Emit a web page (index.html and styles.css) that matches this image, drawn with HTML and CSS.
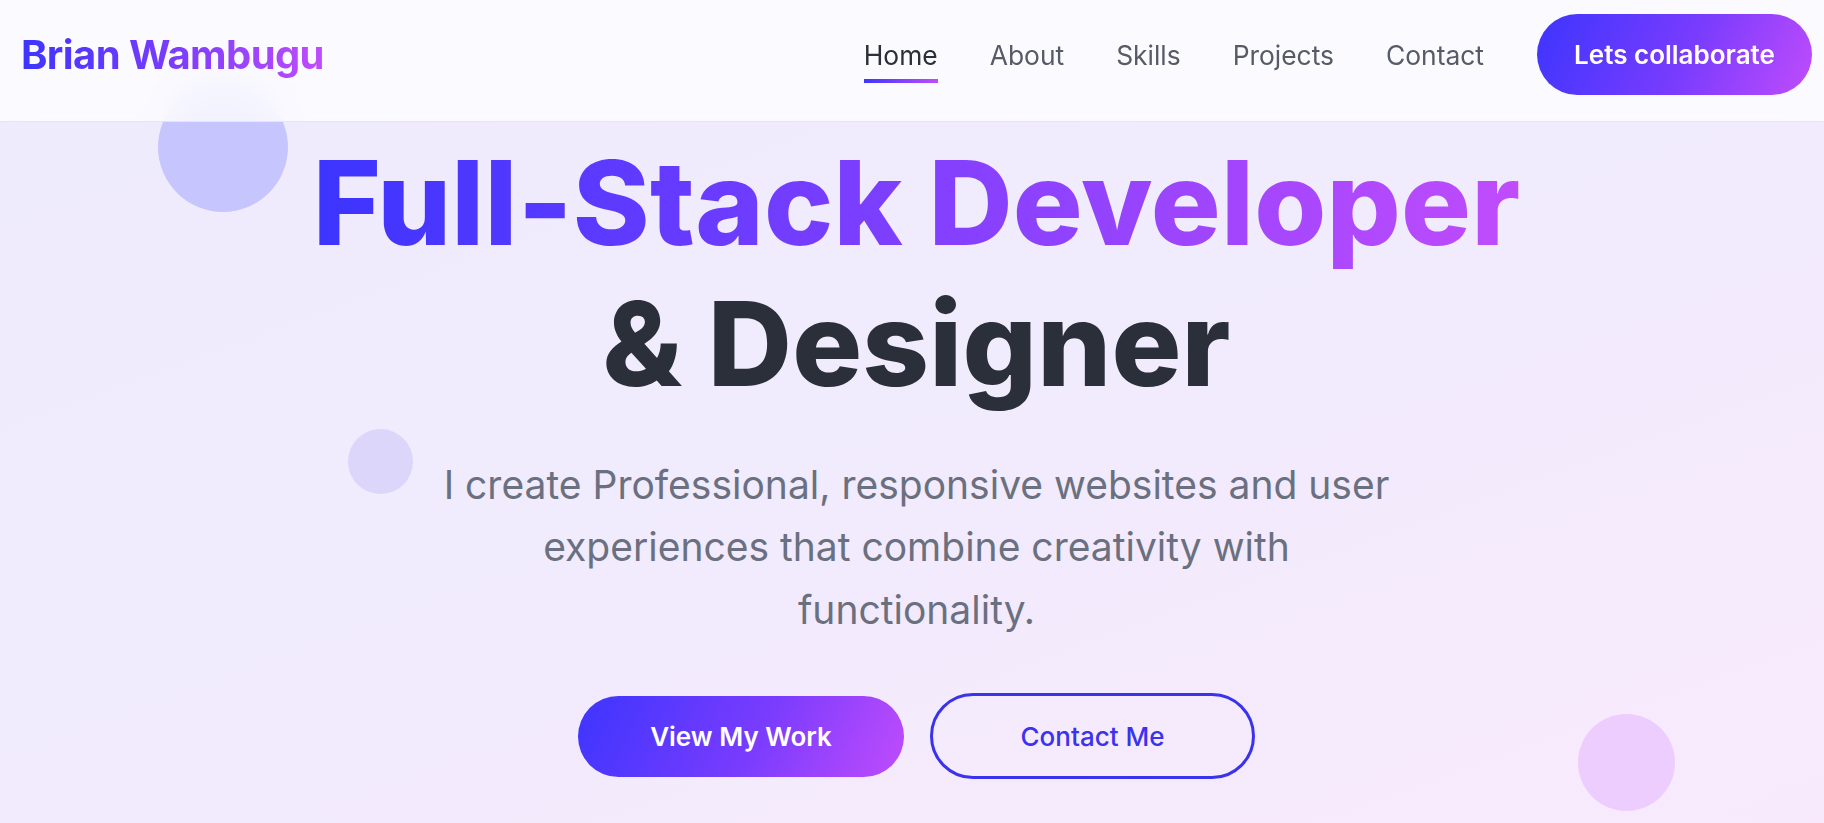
FILE: index.html
```html
<!DOCTYPE html>
<html lang="en">
<head>
<meta charset="utf-8">
<title>Brian Wambugu</title>
<link rel="stylesheet" href="styles.css">
</head>
<body>
<header class="site-header">
  <div class="header-row">
    <a class="logo" href="#">Brian Wambugu</a>
    <nav class="nav">
      <ul class="nav-list">
        <li><a class="nav-link active" href="#">Home</a></li>
        <li><a class="nav-link" href="#">About</a></li>
        <li><a class="nav-link" href="#">Skills</a></li>
        <li><a class="nav-link" href="#">Projects</a></li>
        <li><a class="nav-link" href="#">Contact</a></li>
      </ul>
      <a class="btn btn-cta" href="#">Lets collaborate</a>
    </nav>
  </div>
</header>
<main class="hero">
  <span class="blob blob-1"></span>
  <span class="blob blob-2"></span>
  <span class="blob blob-3"></span>
  <div class="hero-inner">
    <h1 class="hero-title"><span class="grad-text">Full-Stack Developer</span><br>&amp; Designer</h1>
    <p class="hero-text">I create Professional, responsive websites and user experiences that combine creativity with functionality.</p>
    <div class="hero-actions">
      <a class="btn btn-primary" href="#">View My Work</a>
      <a class="btn btn-outline" href="#">Contact Me</a>
    </div>
  </div>
</main>
</body>
</html>
```
FILE: styles.css
```css
* { box-sizing: border-box; }
html, body { margin: 0; padding: 0; }
body {
  font-family: "Inter", "Noto Sans", sans-serif;
  color: #2b2f3a;
  overflow: hidden;
  height: 823px;
}
a { text-decoration: none; }

.site-header {
  position: fixed;
  top: 0; left: 0; right: 0;
  height: 122px;
  padding: 14px 12px 0 21px;
  background: rgba(253, 252, 255, 0.82);
  backdrop-filter: blur(14px);
  border-bottom: 1px solid #e6e4ee;
  z-index: 10;
}
.header-row {
  height: 81px;
  display: flex;
  align-items: center;
  justify-content: space-between;
}
.logo {
  font-size: 40px;
  font-weight: 700;
  letter-spacing: -0.6px;
  background: linear-gradient(90deg, #3d35ff 0%, #7a3cfd 50%, #c04cfc 100%);
  -webkit-background-clip: text;
  background-clip: text;
  color: transparent;
}
.nav {
  display: flex;
  align-items: center;
  gap: 53px;
}
.nav-list {
  list-style: none;
  margin: 0;
  padding: 0;
  display: flex;
  gap: 52px;
}
.nav-link {
  position: relative;
  display: block;
  font-size: 26.4px;
  font-weight: 400;
  color: #565b66;
}
.nav-link.active { color: #2b2f3a; }
.nav-link.active::after {
  content: "";
  position: absolute;
  left: 0; right: 0;
  bottom: -12px;
  height: 4px;
  background: linear-gradient(90deg, #3d35ff, #c04cfc);
}
.btn {
  display: inline-flex;
  align-items: center;
  justify-content: center;
  height: 81px;
  border-radius: 999px;
  font-size: 26px;
  font-weight: 600;
}
.btn-cta {
  width: 275px;
  color: #fff;
  background: linear-gradient(115deg, #3d35ff 0%, #7a3cfd 55%, #c04cfc 100%);
}

.hero {
  position: relative;
  min-height: 823px;
  padding: 133px 12px 0 21px;
  background: linear-gradient(160deg, #eeebfd 0%, #f1ebfd 55%, #f8eafc 100%);
}
.blob {
  position: absolute;
  border-radius: 50%;
}
.blob-1 { left: 158px; top: 82px; width: 130px; height: 130px; background: #c7c5fd; }
.blob-2 { left: 348px; top: 429px; width: 65px; height: 65px; background: #dcd6fb; }
.blob-3 { left: 1578px; top: 714px; width: 97px; height: 97px; background: #edcdfe; }

.hero-inner {
  position: relative;
  display: flex;
  flex-direction: column;
  align-items: center;
  text-align: center;
}
.hero-title {
  margin: 0 0 39px;
  font-size: 116.5px;
  font-weight: 800;
  line-height: 1.21;
  letter-spacing: 0.2px;
  color: #2b2f3a;
}
.grad-text {
  background: linear-gradient(90deg, #3b34ff 0%, #7a3efe 45%, #c04cfc 100%);
  -webkit-background-clip: text;
  background-clip: text;
  color: transparent;
}
.hero-text {
  margin: 0 0 52px;
  max-width: 975px;
  font-size: 39px;
  line-height: 1.6;
  font-weight: 400;
  color: #6b7080;
}
.hero-actions {
  display: flex;
  align-items: center;
  gap: 26px;
}
.btn-primary {
  width: 326px;
  color: #fff;
  background: linear-gradient(115deg, #3d35ff 0%, #7a3cfd 55%, #c04cfc 100%);
}
.btn-outline {
  width: 325px;
  height: 86px;
  font-weight: 500;
  color: #3a32ee;
  border: 3px solid #3a32ee;
  background: transparent;
}
```
